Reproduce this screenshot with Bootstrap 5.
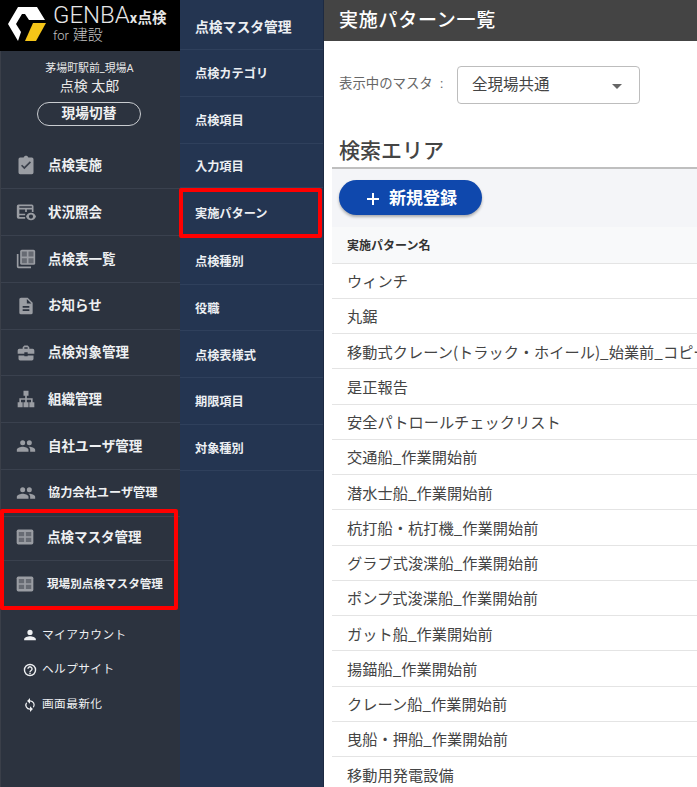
<!DOCTYPE html>
<html lang="ja">
<head>
<meta charset="utf-8">
<title>実施パターン一覧</title>
<link rel="stylesheet" href="https://cdn.jsdelivr.net/npm/bootstrap@5.3.0/dist/css/bootstrap.min.css">
<style>
html,body{height:787px;overflow:hidden}
body{font-family:Roboto,"Noto Sans CJK JP",sans-serif;background:#fff;width:697px}
.shell{height:787px;width:697px;overflow:hidden}
.side{width:180px;flex:none;background:#2c333f;border-left:1px solid #3a3f49;color:#fff}
.logo-bar{height:51px;background:#000;margin-left:-1px;padding:7px 0 0 8px;gap:7px}
.logo-t{line-height:1;color:#e6e6e6;margin-top:0}
.logo-a{font-size:24px;line-height:17px;font-weight:300;white-space:nowrap;letter-spacing:0}
.logo-a span{font-size:14.5px;font-weight:700;letter-spacing:.2px}
.logo-b{font-size:15px;line-height:16px;font-weight:300;color:#c4c4c4}
.logo-b small{font-size:13px}
.who{height:91px;padding:11px 2px 0 0;text-align:center;color:#e8e8e8}
.who-a{font-size:10.9px;line-height:14px}
.who-b{font-size:14px;line-height:20px}
.switch{display:block;width:104px;height:24px;margin:6px 0 0 36px;border:1px solid #c9ccd0;border-radius:12px;font-size:13.7px;line-height:21px;font-weight:700;color:#f0f0f0}
.mitem{height:46.9px;border-bottom:1px solid #3a414e;padding-left:15px;font-size:13.5px;font-weight:700;color:#eef0f2;white-space:nowrap}
.mitem:last-child{border-bottom:0}
.mitem svg{width:20px;height:20px;flex:none;fill:#9a9da3;margin-right:12px}
.mitem svg .cell{fill:#676b73}
.mitem svg .tick{fill:#3a404b}
.mitem .tiny{font-size:11.6px}
.mitem .mid{font-size:12.2px}
.grp{padding-left:11px}
.sub{font-size:11.7px;color:#eef0f2;height:34.6px;padding-left:22px;white-space:nowrap}
.sub svg{width:14px;height:14px;fill:#eef0f2;flex:none;margin-right:5px}
.sub svg .ring{fill:none;stroke:#eef0f2;stroke-width:2.4}
.sub span{letter-spacing:.4px}
.subs{padding-top:8px}
.redbox{outline:4px solid #f00;outline-offset:-4px;border-radius:2px}
.leftred{margin:-8px 2px 0 -1px;height:101px;padding:5px 4px}
.mid-col{width:144px;flex:none;background:#243551;border-right:1px solid #1d2a42}
.mlink{height:47px;border-bottom:1px solid #2f405c;padding:3px 0 0 15px;font-size:12.2px;font-weight:700;color:#eceff3;white-space:nowrap}
.mlink.big{font-size:13.8px;height:50px;padding-top:5px}
.mlink.short{height:44px}
.mlink.after{height:46.7px}
.midred{margin:0 1px 0 -1px;height:50px;padding:3px 0 0 16px;border-bottom:0}
.main-col{flex:1;min-width:0;background:#fff}
.titlebar{height:41px;background:#444;color:#fff;font-size:19px;font-weight:500;padding-left:15px;line-height:42px;white-space:nowrap;letter-spacing:.75px}
.master{height:85px;padding:25px 0 0 15px}
.master-l{flex:none;width:118px;font-size:13.4px;color:#666;line-height:38px;margin-top:-1px;white-space:nowrap;word-spacing:4px}
.sel{width:183px;height:38px;border:1px solid #bdbdbd;border-radius:4px;padding:2px 17px 0 14px;font-size:15.5px;color:#444}
.caret{width:0;height:0;border-left:5px solid transparent;border-right:5px solid transparent;border-top:5px solid #666}
.search-h{height:41px;margin:0 0 0 15px;font-size:21px;font-weight:500;color:#444;line-height:50px}
.pane{margin-left:8px;border-top:2px solid #bfbfbf;background:#fff}
.tools{height:58px;background:#f4f5f8;padding:11px 0 0 7px}
.addbtn{width:143px;height:35px;border-radius:18px;background:#0f48ad;color:#fff;border:0;padding:0;font-size:17px;font-weight:700;box-shadow:0 2px 3px rgba(0,0,0,.3);line-height:34px}
.addbtn svg{width:14px;height:14px;margin:0 9px 0 2px;stroke:#fff;stroke-width:2}
.tbl{margin:0;table-layout:fixed;width:100%}
.tbl th,.tbl td{padding:0 0 0 15px;vertical-align:middle;white-space:nowrap;overflow:hidden;color:#444;border-bottom:1px solid #e4e4e4;background:transparent;box-shadow:none}
.tbl th{height:36px;padding-top:2px;font-size:12px;font-weight:700;color:#333;background:#f8f9fa}
.tbl td{height:35.25px;padding-top:0;font-family:"Noto Sans CJK JP",sans-serif;font-size:15.2px;font-weight:400;letter-spacing:.05px}
</style>
</head>
<body>
<div class="shell d-flex">
  <aside class="side d-flex flex-column">
    <div class="logo-bar d-flex align-items-start">
      <svg width="38" height="34" viewBox="8 7 38 34" aria-hidden="true">
        <path d="M18 7H37L45 20H29L25 14H22L16 24L21 32L18 41L8 24Z" fill="#fff"/>
        <path d="M33 23H46L36 41H25Z" fill="#f5c518"/>
      </svg>
      <div class="logo-t">
        <div class="logo-a">GENBA<span>x点検</span></div>
        <div class="logo-b"><small>for</small> 建設</div>
      </div>
    </div>
    <div class="who">
      <div class="who-a">茅場町駅前_現場A</div>
      <div class="who-b">点検 太郎</div>
      <a class="switch text-decoration-none">現場切替</a>
    </div>
    <div class="d-flex align-items-center mitem"><svg viewBox="0 0 24 24"><path d="M19 3h-4.200C14.400 1.800 13.300 1 12 1s-2.400.8-2.800 2H5a2 2 0 0 0-2 2v16a2 2 0 0 0 2 2h14a2 2 0 0 0 2-2V5a2 2 0 0 0-2-2z"/><path class="tick" d="M10 17l-4-4 1.400-1.400L10 14.200l6.600-6.600L18 9z"/></svg>点検実施</div>
    <div class="d-flex align-items-center mitem"><svg viewBox="0 0 24 24"><path d="M3 3h16a2 2 0 0 1 2 2v7h-2V9h-6v3h-2V9H4v5h7v2H4v2h7v2H3a2 2 0 0 1-2-2V5a2 2 0 0 1 2-2zM4 5v2h15V5z"/><path d="M18 13c-3 0-5 2-6 4.500 1 2.500 3 4.500 6 4.500s5-2 6-4.500c-1-2.500-3-4.500-6-4.500zm0 7a2.500 2.500 0 1 1 0-5 2.500 2.500 0 0 1 0 5z"/></svg>状況照会</div>
    <div class="d-flex align-items-center mitem"><svg viewBox="0 0 24 24"><path d="M3 6H1v15a2 2 0 0 0 2 2h15v-2H3z"/><rect x="5" y="1" width="18" height="18" rx="2"/><path class="cell" d="M7 3h6v6H7zM15 3h6v6h-6zM7 11h6v6H7zM15 11h6v6h-6z"/></svg>点検表一覧</div>
    <div class="d-flex align-items-center mitem"><svg viewBox="0 0 24 24"><path d="M14 2H6a2 2 0 0 0-2 2v16a2 2 0 0 0 2 2h12a2 2 0 0 0 2-2V8zm2 16H8v-2h8zm0-4H8v-2h8zm-3-5V3.500L18.500 9z"/></svg>お知らせ</div>
    <div class="d-flex align-items-center mitem"><svg viewBox="0 0 24 24"><path d="M10 16v-1H3v4a2 2 0 0 0 2 2h14a2 2 0 0 0 2-2v-4h-7v1zm10-9h-4V5l-2-2h-4L8 5v2H4a2 2 0 0 0-2 2v4h8v-2h4v2h8V9a2 2 0 0 0-2-2zm-6 0h-4V5h4z"/></svg>点検対象管理</div>
    <div class="d-flex align-items-center mitem"><svg viewBox="0 0 24 24"><path d="M9 2h6v6h-2v3h7v5h2v6h-6v-6h2v-3h-5v3h2v6H9v-6h2v-3H6v3h2v6H2v-6h2v-5h7V8H9z"/></svg>組織管理</div>
    <div class="d-flex align-items-center mitem"><svg viewBox="0 0 24 24"><path d="M16 11a3 3 0 1 0 0-6 3 3 0 0 0 0 6zm-8 0a3 3 0 1 0 0-6 3 3 0 0 0 0 6zm0 2c-2.300 0-7 1.200-7 3.500V19h14v-2.500C15 14.200 10.300 13 8 13zm8 0h-1c1.200.8 2 2 2 3.500V19h6v-2.500c0-2.300-4.700-3.500-7-3.500z"/></svg>自社ユーザ管理</div>
    <div class="d-flex align-items-center mitem"><svg viewBox="0 0 24 24"><path d="M16 11a3 3 0 1 0 0-6 3 3 0 0 0 0 6zm-8 0a3 3 0 1 0 0-6 3 3 0 0 0 0 6zm0 2c-2.300 0-7 1.200-7 3.500V19h14v-2.500C15 14.200 10.300 13 8 13zm8 0h-1c1.200.8 2 2 2 3.500V19h6v-2.500c0-2.300-4.700-3.500-7-3.500z"/></svg><span class="mid">協力会社ユーザ管理</span></div>
    <div class="redbox leftred">
      <div class="d-flex align-items-center mitem grp"><svg viewBox="0 0 24 24"><rect x="2" y="3" width="20" height="18" rx="2"/><path class="cell" d="M4.500 6h6.500v5H4.500zM13 6h6.500v5H13zM4.500 13h6.500v5H4.500zM13 13h6.500v5H13z"/></svg>点検マスタ管理</div>
      <div class="d-flex align-items-center mitem grp"><svg viewBox="0 0 24 24"><rect x="2" y="3" width="20" height="18" rx="2"/><path class="cell" d="M4.500 6h6.500v5H4.500zM13 6h6.500v5H13zM4.500 13h6.500v5H4.500zM13 13h6.500v5H13z"/></svg><span class="tiny">現場別点検マスタ管理</span></div>
    </div>
    <div class="subs">
      <div class="d-flex align-items-center sub"><svg viewBox="0 0 24 24"><path d="M12 12a4.500 4.500 0 1 0 0-9 4.500 4.500 0 0 0 0 9zm0 2c-4 0-10 1.800-10 5v2h20v-2c0-3.200-6-5-10-5z"/></svg><span>マイアカウント</span></div>
      <div class="d-flex align-items-center sub"><svg viewBox="0 0 24 24"><circle class="ring" cx="12" cy="12" r="9.500"/><path class="ring" d="M8.500 10a3.500 3.500 0 1 1 5.500 2.900c-1.200.8-2 1.400-2 2.600"/><rect x="10.800" y="16.500" width="2.400" height="2.400"/></svg><span>ヘルプサイト</span></div>
      <div class="d-flex align-items-center sub"><svg viewBox="0 0 24 24"><path d="M12 4V0L7 5l5 5V6a6 6 0 0 1 5.100 9.200l1.500 1.500A8 8 0 0 0 12 4zm0 14a6 6 0 0 1-5.100-9.200L5.400 7.300A8 8 0 0 0 12 20v4l5-5-5-5z"/></svg><span>画面最新化</span></div>
    </div>
  </aside>
  <nav class="mid-col">
    <div class="d-flex align-items-center mlink big">点検マスタ管理</div>
    <div class="d-flex align-items-center mlink">点検カテゴリ</div>
    <div class="d-flex align-items-center mlink">点検項目</div>
    <div class="d-flex align-items-center mlink short">入力項目</div>
    <div class="d-flex align-items-center mlink redbox midred">実施パターン</div>
    <div class="d-flex align-items-center mlink after">点検種別</div>
    <div class="d-flex align-items-center mlink after">役職</div>
    <div class="d-flex align-items-center mlink after">点検表様式</div>
    <div class="d-flex align-items-center mlink after">期限項目</div>
    <div class="d-flex align-items-center mlink after">対象種別</div>
  </nav>
  <main class="main-col">
    <div class="titlebar">実施パターン一覧</div>
    <div class="master d-flex align-items-start">
      <span class="master-l">表示中のマスタ :</span>
      <div class="sel d-flex align-items-center justify-content-between"><span>全現場共通</span><i class="caret"></i></div>
    </div>
    <h2 class="search-h">検索エリア</h2>
    <div class="pane">
      <div class="tools"><button class="addbtn" type="button"><svg viewBox="0 0 14 14" fill="none"><path d="M7 1v12M1 7h12"/></svg>新規登録</button></div>
      <table class="table tbl">
        <thead><tr><th>実施パターン名</th></tr></thead>
        <tbody>
          <tr><td>ウィンチ</td></tr>
          <tr><td>丸鋸</td></tr>
          <tr><td>移動式クレーン(トラック・ホイール)_始業前_コピー</td></tr>
          <tr><td>是正報告</td></tr>
          <tr><td>安全パトロールチェックリスト</td></tr>
          <tr><td>交通船_作業開始前</td></tr>
          <tr><td>潜水士船_作業開始前</td></tr>
          <tr><td>杭打船・杭打機_作業開始前</td></tr>
          <tr><td>グラブ式浚渫船_作業開始前</td></tr>
          <tr><td>ポンプ式浚渫船_作業開始前</td></tr>
          <tr><td>ガット船_作業開始前</td></tr>
          <tr><td>揚錨船_作業開始前</td></tr>
          <tr><td>クレーン船_作業開始前</td></tr>
          <tr><td>曳船・押船_作業開始前</td></tr>
          <tr><td>移動用発電設備</td></tr>
        </tbody>
      </table>
    </div>
  </main>
</div>
<script src="https://cdn.jsdelivr.net/npm/bootstrap@5.3.0/dist/js/bootstrap.bundle.min.js"></script>
</body>
</html>
